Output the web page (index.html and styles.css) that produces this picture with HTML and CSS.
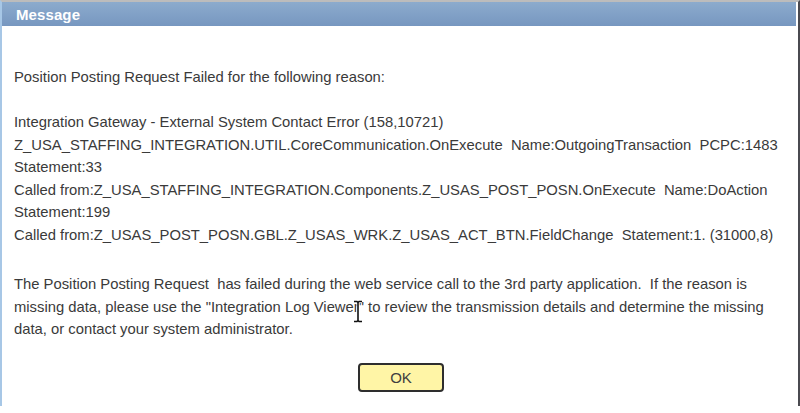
FILE: index.html
```html
<!DOCTYPE html>
<html>
<head>
<meta charset="utf-8">
<title>Message</title>
<link rel="stylesheet" href="styles.css">
</head>
<body>
<div class="dialog">
  <div class="titlebar"><span class="title">Message</span></div>
  <div class="body">
    <p class="msg first">Position Posting Request Failed for the following reason:</p>
    <p class="msg">Integration Gateway - External System Contact Error (158,10721)<br>Z_USA_STAFFING_INTEGRATION.UTIL.CoreCommunication.OnExecute&nbsp; Name:OutgoingTransaction&nbsp; PCPC:1483<br>Statement:33<br>Called from:Z_USA_STAFFING_INTEGRATION.Components.Z_USAS_POST_POSN.OnExecute&nbsp; Name:DoAction<br>Statement:199<br>Called from:Z_USAS_POST_POSN.GBL.Z_USAS_WRK.Z_USAS_ACT_BTN.FieldChange&nbsp; Statement:1. (31000,8)</p>
    <p class="msg last">The Position Posting Request&nbsp; has failed during the web service call to the 3rd party application.&nbsp; If the reason is<br>missing data, please use the "Integration Log Viewer" to review the transmission details and determine the missing<br>data, or contact your system administrator.</p>
    <div class="actions"><button class="ok" type="button">OK</button></div>
  </div>
  <svg class="cursor" width="12" height="23" viewBox="0 0 12 23"><path d="M2 1.5h3l1 1 1-1h3M6 2.5v18M2 21.5h3l1-1 1 1h3" fill="none" stroke="#fff" stroke-width="3"/><path d="M2 1.5h3l1 1 1-1h3M6 2.5v18M2 21.5h3l1-1 1 1h3" fill="none" stroke="#111" stroke-width="1.6"/></svg>
</div>
</body>
</html>
```
FILE: styles.css
```css
html, body {
  margin: 0;
  padding: 0;
  background: #ffffff;
}
body {
  font-family: "Liberation Sans", Arial, sans-serif;
  width: 800px;
  height: 413px;
  overflow: hidden;
}
.dialog {
  position: relative;
  box-sizing: border-box;
  width: 800px;
  height: 406px;
  border-top: 2px solid #bcbcbc;
  border-left: 2px solid #a7c7e6;
  border-right: 2px solid #4a4a50;
  background: #ffffff;
}
.titlebar {
  height: 24px;
  background: linear-gradient(#8cabcd, #7797c0);
  display: flex;
  align-items: center;
  padding-left: 14px;
  margin-right: 2px;
}
.title {
  color: #ffffff;
  font-weight: bold;
  font-size: 15px;
  letter-spacing: 0.1px;
}
.body {
  padding: 40px 12px 0 12px;
  color: #3a3a3a;
  font-size: 14.8px;
  line-height: 22.5px;
}
.msg {
  margin: 0;
  white-space: nowrap;
}
.msg.first {
  margin-bottom: 22.5px;
}
.msg.last {
  margin-top: 27px;
}
.actions {
  display: flex;
  justify-content: center;
  padding-top: 22px;
}
.ok {
  width: 86px;
  height: 29px;
  box-sizing: border-box;
  border: 2px solid #2e2e2e;
  border-radius: 4px;
  background: #fff5a6;
  color: #404040;
  font-family: "Liberation Sans", Arial, sans-serif;
  font-size: 15px;
  padding: 0;
  margin-left: 2px;
}
.cursor {
  position: absolute;
  left: 350px;
  top: 298px;
}
```
